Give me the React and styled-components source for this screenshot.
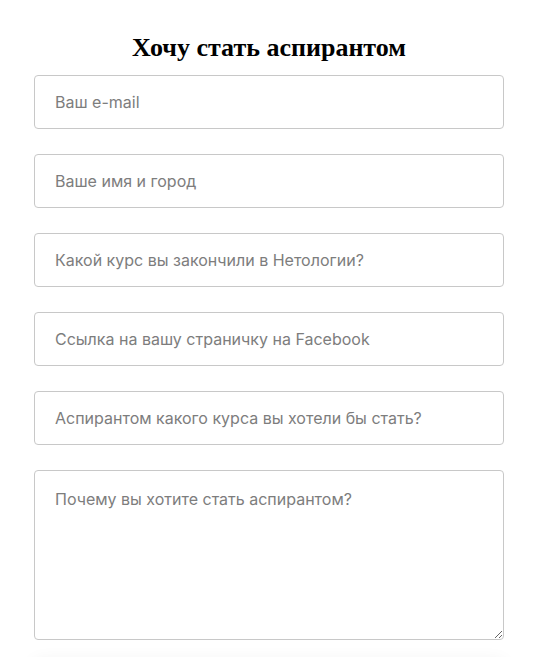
import React from 'react';
import styled, { createGlobalStyle } from 'styled-components';

const GlobalStyle = createGlobalStyle`
  body {
    margin: 0;
    background: #fff;
  }
`;

const Page = styled.div`
  padding: 30px 30px 40px 34px;
`;

const Title = styled.h2`
  margin: 0 0 9px;
  text-align: center;
  font-family: 'Liberation Serif', 'Times New Roman', serif;
  font-size: 26px;
  line-height: 36px;
  font-weight: bold;
  color: #000;
`;

const Form = styled.form`
  display: flex;
  flex-direction: column;
  gap: 25px;
  width: 470px;
`;

const Field = styled.input`
  box-sizing: border-box;
  width: 100%;
  height: 54px;
  padding: 0 20px;
  border: 1px solid #c8c8c8;
  border-radius: 4px;
  font-family: Inter, 'Noto Sans', sans-serif;
  font-size: 16px;
  color: #333;
  outline: none;

  &::placeholder {
    color: #7d7d7d;
  }
`;

const Area = styled.textarea`
  box-sizing: border-box;
  width: 100%;
  height: 170px;
  padding: 17px 20px;
  border: 1px solid #c8c8c8;
  border-radius: 4px;
  font-family: Inter, 'Noto Sans', sans-serif;
  font-size: 16px;
  line-height: 22px;
  color: #333;
  outline: none;
  resize: vertical;

  &::placeholder {
    color: #7d7d7d;
  }
`;

const Submit = styled.button`
  width: 100%;
  height: 54px;
  margin-top: 5px;
  border: none;
  border-radius: 4px;
  background: #fff;
  box-shadow: 0 -8px 18px rgba(0, 0, 0, 0.07);
  font-family: Inter, 'Noto Sans', sans-serif;
  font-size: 16px;
  color: #333;
`;

const fields = [
  'Ваш e-mail',
  'Ваше имя и город',
  'Какой курс вы закончили в Нетологии?',
  'Ссылка на вашу страничку на Facebook',
  'Аспирантом какого курса вы хотели бы стать?',
];

function App() {
  return (
    <Page>
      <GlobalStyle />
      <Title>Хочу стать аспирантом</Title>
      <Form onSubmit={e => e.preventDefault()}>
        {fields.map(text => (
          <Field key={text} type="text" placeholder={text} />
        ))}
        <Area placeholder="Почему вы хотите стать аспирантом?" />
        <Submit type="submit">Отправить</Submit>
      </Form>
    </Page>
  );
}

export default App;
